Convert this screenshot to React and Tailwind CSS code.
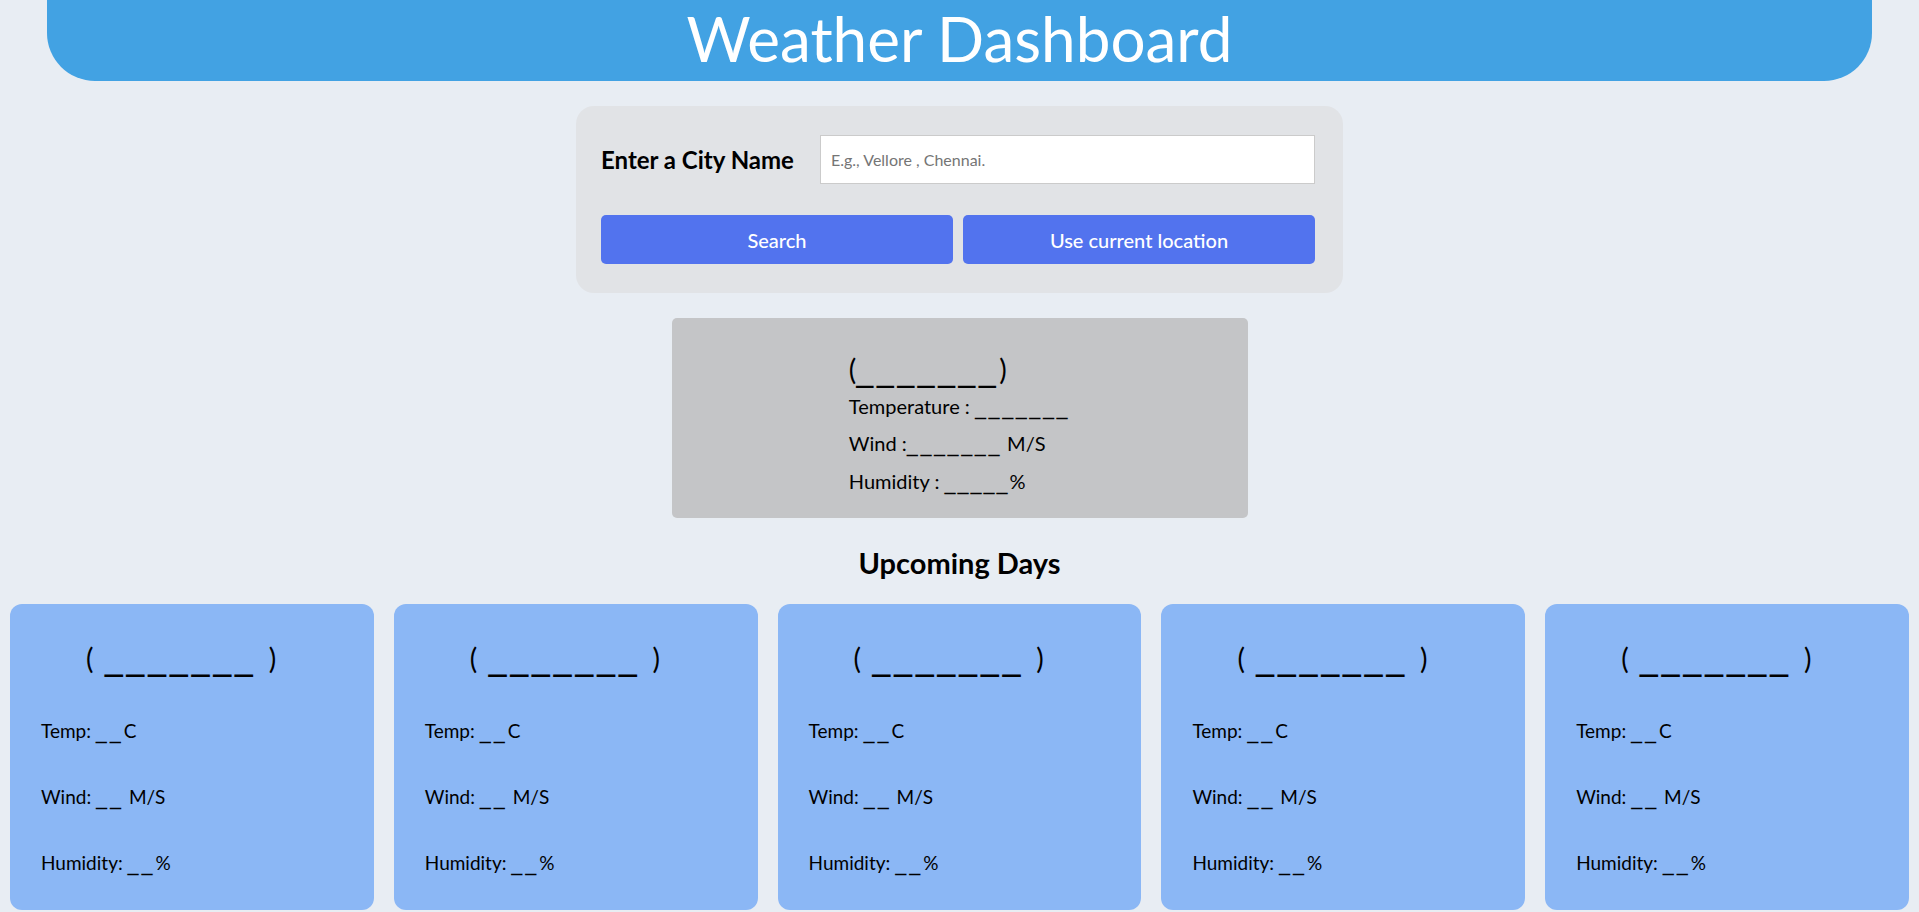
import React from 'react';

const forecast = [1, 2, 3, 4, 5];

// blank value placeholder: the original font draws long underscores, so use a wider one
const Blank = ({ n, className }) => (
  <span className={`font-['DejaVu_Sans',sans-serif] ${className}`}>{'_'.repeat(n)}</span>
);

const DayCard = () => (
  <div className="flex-1 h-[306px] rounded-[12px] bg-[#8bb7f5] text-black">
    <h3 className="pl-[76px] pt-[36px] text-[28px] leading-[34px]">
      ( <Blank n={7} className="ml-[4px] mr-[5px] text-[36px] tracking-[3.7px]" /> )
    </h3>
    <p className="pl-[31px] mt-[44px] text-[19px] leading-[24px]">
      Temp: <Blank n={2} className="text-[22px] tracking-[3px]" />C
    </p>
    <p className="pl-[31px] mt-[42px] text-[19px] leading-[24px]">
      Wind: <Blank n={2} className="text-[22px] tracking-[3px]" /> M/S
    </p>
    <p className="pl-[31px] mt-[42px] text-[19px] leading-[24px]">
      Humidity: <Blank n={2} className="text-[22px] tracking-[3px]" />%
    </p>
  </div>
);

export default function App() {
  return (
    <div className="min-h-screen bg-[#e8edf3] font-['Lato',sans-serif] text-black">
      <header className="mx-[47px] h-[81px] rounded-b-[48px] bg-[#42a2e3] flex justify-center">
        <h1 className="text-[62px] leading-[76px] text-white">Weather Dashboard</h1>
      </header>

      <div className="mx-auto mt-[25px] w-[767px] rounded-[18px] bg-[#e1e3e6] pt-[29px] pb-[29px] pl-[25px] pr-[28px]">
        <div className="flex items-center">
          <label className="w-[219px] text-[24px] font-bold">Enter a City Name</label>
          <input
            type="text"
            placeholder="E.g., Vellore , Chennai."
            className="h-[49px] flex-1 border border-[#cbcbcb] bg-white px-[10px] text-[16px] outline-none placeholder:text-[#757575]"
          />
        </div>
        <div className="mt-[31px] flex gap-[10px]">
          <button className="h-[49px] flex-1 rounded-[5px] bg-[#5273ee] text-[20px] font-medium text-white">Search</button>
          <button className="h-[49px] flex-1 rounded-[5px] bg-[#5273ee] text-[20px] font-medium text-white">Use current location</button>
        </div>
      </div>

      <div className="mx-auto mt-[25px] flex h-[200px] w-[576px] justify-center rounded-[5px] bg-[#c4c5c7]">
        <div className="pt-[30px]">
          <h2 className="text-[28px] leading-[40px]">
            (<Blank n={7} className="text-[34px] tracking-[3.4px]" />)
          </h2>
          <p className="mt-[5px] text-[20px] leading-[24px]">
            Temperature : <Blank n={7} className="text-[22px] tracking-[2.6px]" />
          </p>
          <p className="mt-[12px] text-[20px] leading-[24px]">
            Wind :<Blank n={7} className="text-[22px] tracking-[2.6px]" /> M/S
          </p>
          <p className="mt-[13px] text-[20px] leading-[24px]">
            Humidity : <Blank n={5} className="text-[22px] tracking-[2px]" />%
          </p>
        </div>
      </div>

      <h2 className="mt-[27px] text-center text-[29px] font-bold leading-[36px]">Upcoming Days</h2>

      <div className="mt-[23px] flex gap-[20px] px-[10px]">
        {forecast.map((d) => (
          <DayCard key={d} />
        ))}
      </div>
    </div>
  );
}
